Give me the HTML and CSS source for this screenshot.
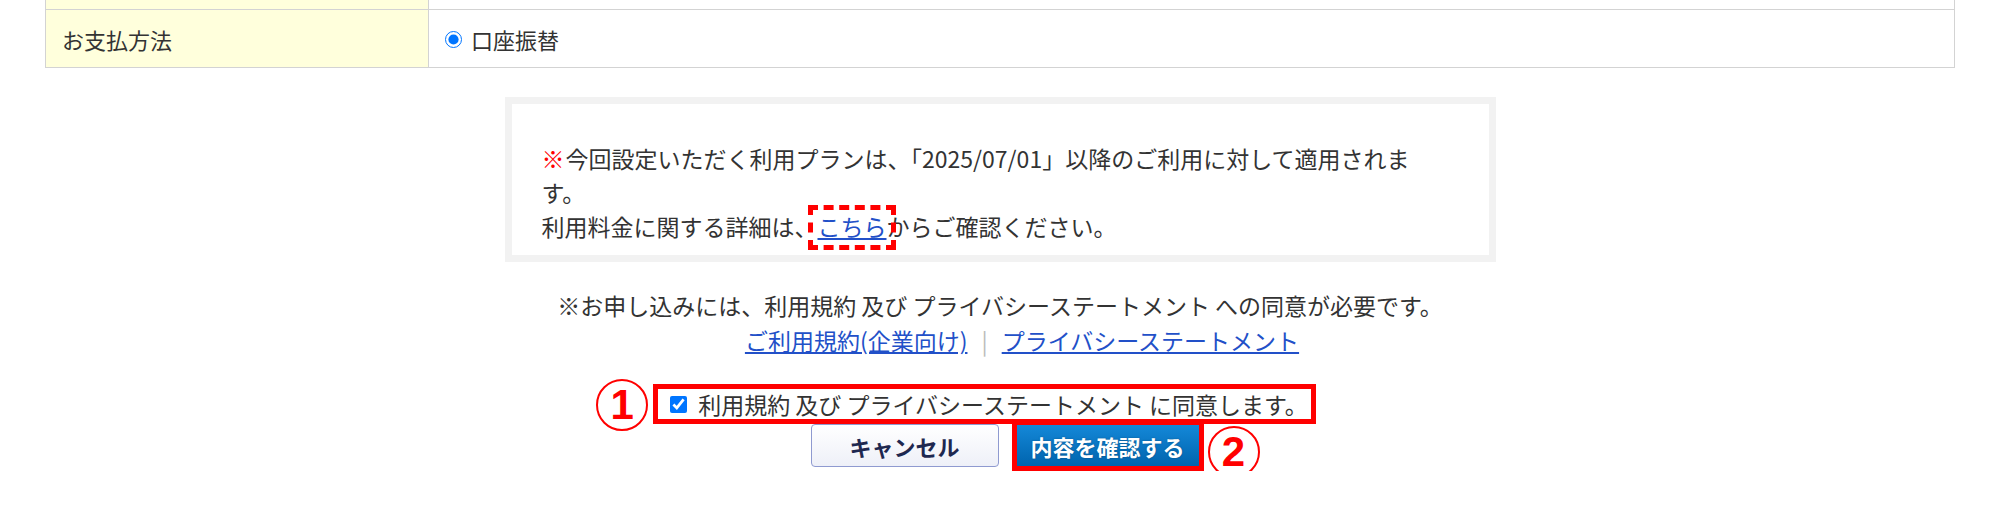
FILE: index.html
```html
<!DOCTYPE html>
<html lang="ja">
<head>
    <meta charset="UTF-8">
    <title>お申し込み内容の入力</title>
    <link rel="stylesheet" href="styles.css">
</head>
<body>
    <div class="page">
        <table class="form-table">
            <tr class="cut-row">
                <th></th>
                <td></td>
            </tr>
            <tr>
                <th>お支払方法</th>
                <td>
                    <label class="radio-label"><input type="radio" name="pay" checked> 口座振替</label>
                </td>
            </tr>
        </table>

        <div class="notice">
            <p><span class="mark">※</span>今回設定いただく利用プランは、「2025/07/01」以降のご利用に対して適用されます。</p>
            <p>利用料金に関する詳細は、<a href="#" class="marked">こちら</a>からご確認ください。</p>
        </div>

        <p class="agree-note">※お申し込みには、利用規約 及び プライバシーステートメント への同意が必要です。</p>
        <p class="agree-links">
            <a href="#">ご利用規約(企業向け)</a><span class="sep">|</span><a href="#">プライバシーステートメント</a>
        </p>

        <div class="agree-row">
            <label class="agree-box">
                <span class="step step-1">1</span>
                <input type="checkbox" checked>
                利用規約 及び プライバシーステートメント に同意します。
            </label>
        </div>

        <div class="buttons">
            <button class="btn btn-cancel">キャンセル</button>
            <span class="confirm-frame">
                <button class="btn btn-confirm">内容を確認する</button>
                <span class="step step-2">2</span>
            </span>
        </div>
    </div>
</body>
</html>
```

FILE: styles.css
```css
body {
    margin: 0;
    background: #fff;
    color: #333;
    font-family: "Noto Sans CJK JP", "Noto Sans", sans-serif;
    font-size: 22px;
}
.page {
    padding: 0 45px;
}
.form-table {
    width: 100%;
    border-collapse: collapse;
}
.form-table th,
.form-table td {
    border: 1px solid #d3d3d3;
    height: 57px;
    padding: 0 0 0 16px;
    text-align: left;
    font-weight: normal;
}
.form-table th {
    width: 366px;
    background: #ffffdc;
}
.form-table .cut-row th,
.form-table .cut-row td {
    height: 9px;
    border-top: none;
}
.radio-label {
    display: inline-flex;
    align-items: center;
    gap: 9px;
}
.radio-label input {
    width: 17px;
    height: 17px;
    margin: 0;
}

.notice {
    width: 868px;
    margin: 29px auto 0;
    border: 7px solid #f2f2f2;
    padding: 37px 79px 12px 30px;
    font-size: 23px;
    line-height: 34px;
}
.notice p {
    margin: 0;
}
.mark {
    display: inline-block;
    margin-right: 1px;
    color: #f00;
}
a {
    color: #2250c8;
}
.marked {
    position: relative;
}
.marked::after {
    content: "";
    position: absolute;
    left: -10px;
    right: -9px;
    top: -4px;
    bottom: -7px;
    border: 5px dashed #f00;
}

.agree-note,
.agree-links {
    margin: 0;
    text-align: center;
    font-size: 23px;
    line-height: 35px;
}
.agree-note {
    margin-top: 26px;
}
.agree-links {
    padding-left: 44px;
}
.sep {
    color: #bbb;
    margin: 0 14px;
}

.agree-row {
    display: flex;
    justify-content: center;
    margin-top: 26px;
    padding-right: 31px;
}
.agree-box {
    position: relative;
    display: flex;
    align-items: center;
    gap: 11px;
    border: 5px solid #f00;
    padding: 0 3px 0 12px;
    font-size: 23px;
    line-height: 30px;
}
.agree-box input {
    width: 17px;
    height: 17px;
    margin: 0;
}

.buttons {
    display: flex;
    justify-content: center;
    align-items: flex-start;
    gap: 13px;
    padding-left: 14px;
}
.btn {
    font-family: "Noto Sans CJK JP", sans-serif;
    font-size: 22px;
    font-weight: bold;
    border-radius: 4px;
    cursor: pointer;
}
.btn-cancel {
    width: 188px;
    height: 43px;
    color: #1e2850;
    background: linear-gradient(#fff, #eef0f8);
    border: 1px solid #8f9ad0;
}
.confirm-frame {
    position: relative;
    display: block;
    margin-top: -4px;
    border: 5px solid #f00;
}
.btn-confirm {
    display: block;
    width: 182px;
    height: 41px;
    color: #fff;
    border: none;
    border-radius: 0;
    background: linear-gradient(#1488d8, #0064ae);
    text-shadow: 0 0 2px rgba(0,0,0,0.3);
}

.step {
    position: absolute;
    width: 48px;
    height: 48px;
    border: 2px solid #f00;
    border-radius: 50%;
    color: #f00;
    font-family: "Liberation Sans", sans-serif;
    font-size: 42px;
    font-weight: bold;
    line-height: 48px;
    text-align: center;
}
.step-1 {
    right: calc(100% + 10px);
    top: -10px;
}
.step-2 {
    left: calc(100% + 9px);
    top: 1px;
}
```
